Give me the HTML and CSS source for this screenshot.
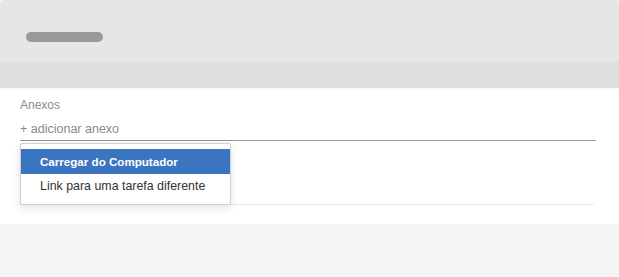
FILE: index.html
```html
<!DOCTYPE html>
<html lang="en">
<head>
  <meta charset="UTF-8">
  <title>Anexos</title>
  <link rel="stylesheet" href="styles.css">
</head>
<body>

<div class="dialog">
  <div class="dialog-head">
    <span class="title-placeholder"></span>
  </div>
  <div class="dialog-band"></div>

  <div class="dialog-body">
    <div class="field">
      <label class="field-label">Anexos</label>
      <div class="add-link">+ adicionar anexo</div>

      <!-- attachment menu -->
      <ul class="menu">
        <li class="menu-item active">Carregar do Computador</li>
        <li class="menu-item">Link para uma tarefa diferente</li>
      </ul>
    </div>
    <div class="field-spacer"></div>
  </div>

  <div class="dialog-foot"></div>
</div>

</body>
</html>
```

FILE: styles.css
```css
/* General Styling */
body {
  margin: 0;
  font-family: 'Liberation Sans', Arial, sans-serif;
  background: #fff;
}

.dialog {
  width: 619px;
  height: 277px;
  border-radius: 3px;
  overflow: hidden;
  display: flex;
  flex-direction: column;
}

.dialog-head {
  height: 62px;
  background: #e6e6e6;
  padding: 0 26px;
  display: flex;
  align-items: center;
}

.title-placeholder {
  display: block;
  width: 77px;
  height: 10px;
  margin-top: 12px;
  border-radius: 5px;
  background: #999;
}

.dialog-band {
  height: 26px;
  background: #dfdfdf;
  box-shadow: 0 1px 3px rgba(0, 0, 0, 0.06);
  position: relative;
}

.dialog-body {
  height: 136px;
  background: #fff;
  padding: 0 23px 0 20px;
}

.field {
  position: relative;
  padding-top: 10px;
  border-bottom: 1px solid #999;
}

.field-label {
  display: block;
  font-size: 12px;
  color: #8c8c8c;
  line-height: 14px;
}

.add-link {
  font-size: 12.5px;
  color: #8a8a8a;
  line-height: 16px;
  margin-top: 9px;
  padding-bottom: 3px;
}

.field-spacer {
  height: 63px;
  border-bottom: 1px solid #e8e8e8;
  margin-right: 2px;
}

/* Dropdown menu */
.menu {
  position: absolute;
  top: 55px;
  left: 0;
  width: 209px;
  margin: 0;
  padding: 5px 0;
  list-style: none;
  background: #fff;
  border: 1px solid #d0d0d0;
  border-radius: 2px;
  box-shadow: 0 3px 8px rgba(0, 0, 0, 0.12);
  z-index: 2;
}

.menu-item {
  height: 25px;
  line-height: 25px;
  padding-left: 19px;
  font-size: 12.4px;
  color: #333;
}

.menu-item.active {
  background: #3b74c0;
  color: #fff;
  font-weight: bold;
  font-size: 11.6px;
}

.dialog-foot {
  flex: 1;
  background: #f4f4f4;
}
```
